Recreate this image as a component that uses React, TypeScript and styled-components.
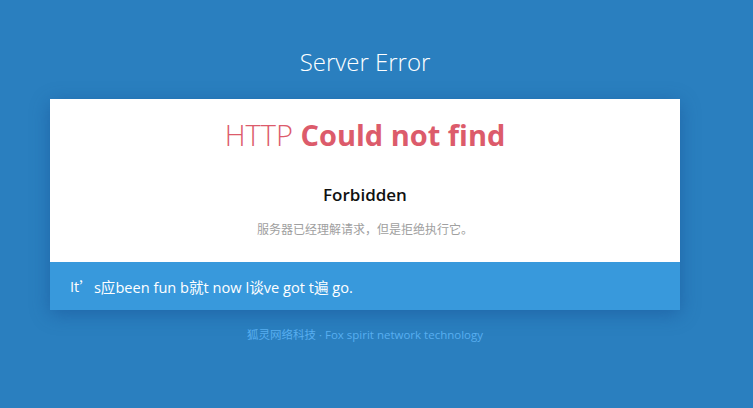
import React from "react";
import styled, { createGlobalStyle } from "styled-components";

const Global = createGlobalStyle`
  html, body { margin: 0; padding: 0; }
  body {
    background: #2a7fbf;
    font-family: "Open Sans", "Noto Sans", "Noto Sans CJK SC", sans-serif;
    height: 408px;
    overflow: hidden;
  }
`;

const Page = styled.div`
  display: flex;
  flex-direction: column;
  align-items: center;
  padding: 45px 23px 0 0;
`;

const Title = styled.h1`
  margin: 0 0 20px;
  font-size: 24px;
  line-height: 34px;
  font-weight: 300;
  color: #ffffff;
`;

const Card = styled.div`
  width: 630px;
  background: #ffffff;
  box-shadow: 0 4px 18px rgba(20, 70, 140, 0.45);
`;

const Body = styled.div`
  display: flex;
  flex-direction: column;
  align-items: center;
  padding: 16px 20px 24px;
`;

const Heading = styled.h2`
  margin: 0;
  font-size: 29px;
  line-height: 40px;
  color: #dc5b6b;
  font-weight: 700;
`;

const Light = styled.span`
  font-weight: 300;
`;

const Sub = styled.h3`
  margin: 27px 0 0;
  font-size: 17px;
  line-height: 26px;
  font-weight: 600;
  color: #111;
`;

const Desc = styled.p`
  margin: 12px 0 0;
  font-size: 12px;
  line-height: 18px;
  color: #a0a0a0;
  font-family: "Noto Sans CJK SC", sans-serif;
`;

const Bar = styled.div`
  background: #3899dc;
  height: 48px;
  display: flex;
  align-items: center;
  padding: 0 20px;
  color: #fff;
  font-size: 14.6px;
  font-family: "Open Sans", "Noto Sans CJK SC", sans-serif;
`;

const Wide = styled.span`
  font-family: "Noto Sans CJK SC", sans-serif;
`;

const Footer = styled.p`
  margin: 16px 0 0;
  font-size: 11.5px;
  color: #58aef0;
  font-family: "Open Sans", "Noto Sans CJK SC", sans-serif;
`;

export default function App() {
  return (
    <>
      <Global />
      <Page>
        <Title>Server Error</Title>
        <Card>
          <Body>
            <Heading>
              <Light>HTTP</Light> Could not find
            </Heading>
            <Sub>Forbidden</Sub>
            <Desc>服务器已经理解请求，但是拒绝执行它。</Desc>
          </Body>
          <Bar>
            It<Wide>’</Wide>s应been fun b就t now l谈ve got t遍 go.
          </Bar>
        </Card>
        <Footer>狐灵网络科技 · Fox spirit network technology</Footer>
      </Page>
    </>
  );
}
